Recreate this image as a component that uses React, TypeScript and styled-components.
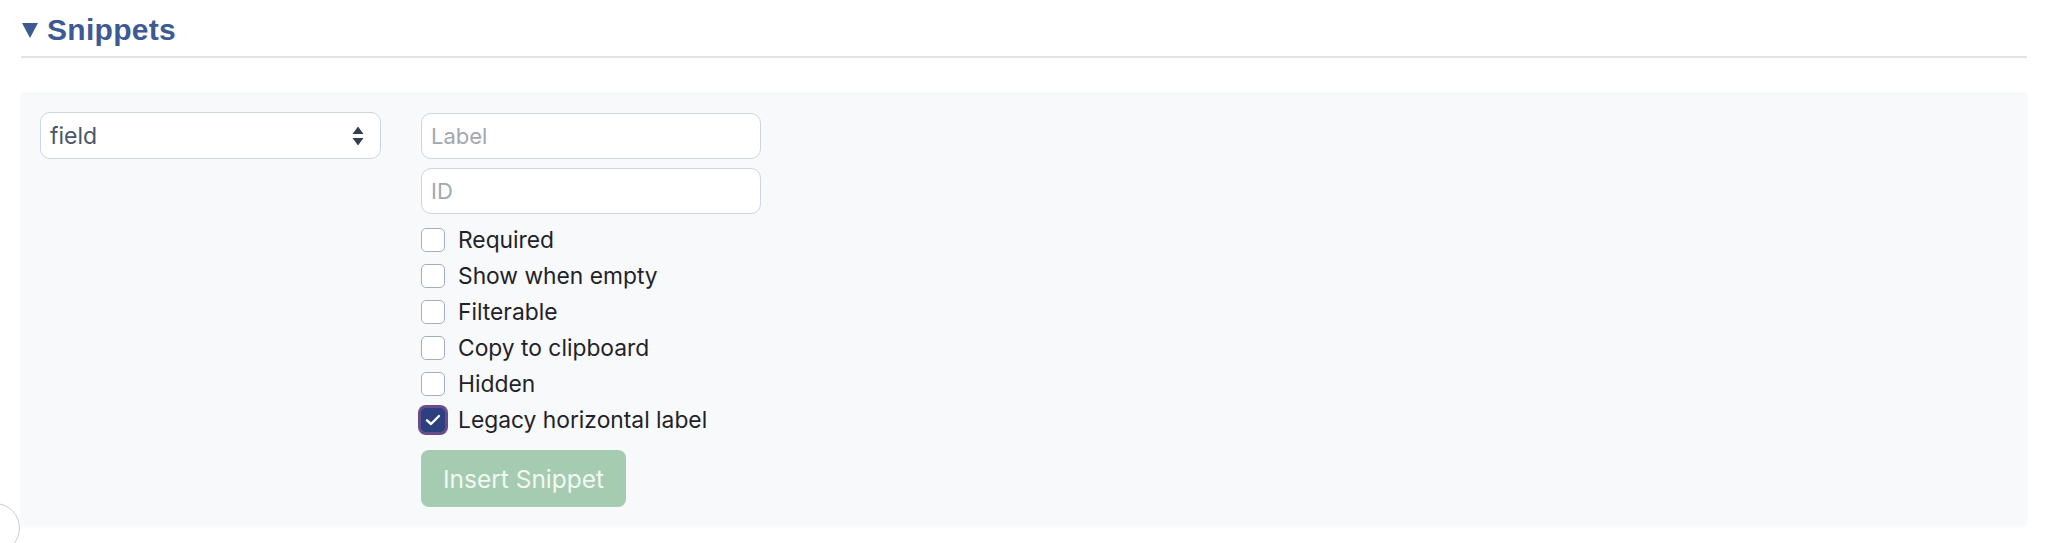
import React from 'react';
import styled, { createGlobalStyle } from 'styled-components';

const GlobalStyle = createGlobalStyle`
    html, body {
        margin: 0;
        padding: 0;
        background: #ffffff;
    }
    body {
        font-family: Inter, "Liberation Sans", Arial, sans-serif;
        color: #1f2328;
    }
`;

const options = [
    { id: 'required', label: 'Required', checked: false },
    { id: 'empty', label: 'Show when empty', checked: false },
    { id: 'filter', label: 'Filterable', checked: false },
    { id: 'copy', label: 'Copy to clipboard', checked: false },
    { id: 'hidden', label: 'Hidden', checked: false },
    { id: 'legacy', label: 'Legacy horizontal label', checked: true },
];

const App = () => {
    const [checks, setChecks] = React.useState<Record<string, boolean>>(
        Object.fromEntries(options.map((o) => [o.id, o.checked])),
    );

    return (
        <Page>
            <GlobalStyle />
            <Header>
                <Caret />
                <Title>Snippets</Title>
            </Header>
            <Divider />
            <Panel>
                <SelectWrap>
                    <SelectText>field</SelectText>
                    <svg width="12" height="20" viewBox="0 0 12 20">
                        <path d="M6 0.5 L11.5 8 L0.5 8 Z" fill="#363f52" />
                        <path d="M0.5 12 L11.5 12 L6 19.5 Z" fill="#363f52" />
                    </svg>
                </SelectWrap>
                <Form>
                    <TextInput placeholder="Label" />
                    <TextInput placeholder="ID" $spaced />
                    <CheckList>
                        {options.map((item) => (
                            <CheckRow key={item.id}>
                                <Box
                                    $checked={checks[item.id]}
                                    onClick={() => setChecks({ ...checks, [item.id]: !checks[item.id] })}
                                >
                                    {checks[item.id] && (
                                        <svg width="16" height="12" viewBox="0 0 16 12">
                                            <path
                                                d="M2 6.3 L6 10 L14 2"
                                                fill="none"
                                                stroke="#ffffff"
                                                strokeWidth="2.4"
                                                strokeLinecap="round"
                                                strokeLinejoin="round"
                                            />
                                        </svg>
                                    )}
                                </Box>
                                <CheckLabel>{item.label}</CheckLabel>
                            </CheckRow>
                        ))}
                    </CheckList>
                    <InsertButton disabled>Insert Snippet</InsertButton>
                </Form>
            </Panel>
            <Bubble />
        </Page>
    );
};

const Page = styled.div`
    position: relative;
    width: 2048px;
    height: 543px;
    overflow: hidden;
    padding: 14px 21px 0 21px;
    box-sizing: border-box;
`;

const Header = styled.div`
    display: flex;
    align-items: center;
    height: 32px;
    gap: 9px;
    padding-left: 1px;
`;

const Caret = styled.span`
    width: 0;
    height: 0;
    border-left: 8.5px solid transparent;
    border-right: 8.5px solid transparent;
    border-top: 15px solid #3d5a94;
    margin-top: 1px;
`;

const Title = styled.h2`
    margin: 0;
    font-family: "Liberation Sans", Arial, sans-serif;
    font-weight: 700;
    font-size: 30px;
    letter-spacing: 0.3px;
    color: #3d5a94;
    line-height: 32px;
`;

const Divider = styled.div`
    height: 2px;
    background: #e4e4e4;
    margin-top: 10px;
`;

const Panel = styled.div`
    display: flex;
    align-items: flex-start;
    gap: 40px;
    margin-top: 34px;
    padding: 20px 19px 16px 19px;
    background: #f8f9fb;
    box-shadow: 0 2px 3px rgba(240, 242, 246, 0.8);
`;

const SelectWrap = styled.div`
    display: flex;
    align-items: center;
    justify-content: space-between;
    width: 341px;
    height: 47px;
    box-sizing: border-box;
    padding: 0 16px 0 9px;
    background: #ffffff;
    border: 1.5px solid #cdd4e2;
    border-radius: 10px;
`;

const SelectText = styled.span`
    font-size: 23px;
    color: #4b5567;
`;

const Form = styled.div`
    display: flex;
    flex-direction: column;
    align-items: flex-start;
    padding-top: 1px;
`;

const TextInput = styled.input<{ $spaced?: boolean }>`
    width: 340px;
    height: 46px;
    box-sizing: border-box;
    margin-top: ${(p) => (p.$spaced ? '9px' : '0')};
    padding: 0 9px;
    font-family: Inter, "Liberation Sans", Arial, sans-serif;
    font-size: 22px;
    color: #1f2328;
    background: #ffffff;
    border: 1.5px solid #cdd4e2;
    border-radius: 10px;
    outline: none;

    &::placeholder {
        color: #a3a7ae;
    }
`;

const CheckList = styled.div`
    display: flex;
    flex-direction: column;
    gap: 12px;
    margin-top: 14px;
`;

const CheckRow = styled.label`
    display: flex;
    align-items: center;
    gap: 13px;
    height: 24px;
    cursor: pointer;
`;

const Box = styled.span<{ $checked?: boolean }>`
    display: flex;
    align-items: center;
    justify-content: center;
    width: 24px;
    height: 24px;
    box-sizing: border-box;
    border-radius: 5px;
    border: 1.5px solid ${(p) => (p.$checked ? '#2c3f7e' : '#a3adc0')};
    background: ${(p) => (p.$checked ? '#2c3f7e' : '#ffffff')};
    box-shadow: ${(p) => (p.$checked ? '0 0 0 3px #674c8c' : 'none')};
`;

const CheckLabel = styled.span`
    font-size: 22.8px;
    color: #1f2328;
    line-height: 24px;
`;

const InsertButton = styled.button`
    margin-top: 18px;
    width: 205px;
    height: 57px;
    padding: 0;
    border: none;
    border-radius: 8px;
    background: #a5cbb0;
    color: #f2f8f3;
    font-family: Inter, "Liberation Sans", Arial, sans-serif;
    font-size: 24.5px;
`;

const Bubble = styled.div`
    position: absolute;
    left: -30px;
    top: 503px;
    width: 48px;
    height: 48px;
    border-radius: 50%;
    border: 1.5px solid #c9ccd2;
    background: #ffffff;
`;

export default App;
